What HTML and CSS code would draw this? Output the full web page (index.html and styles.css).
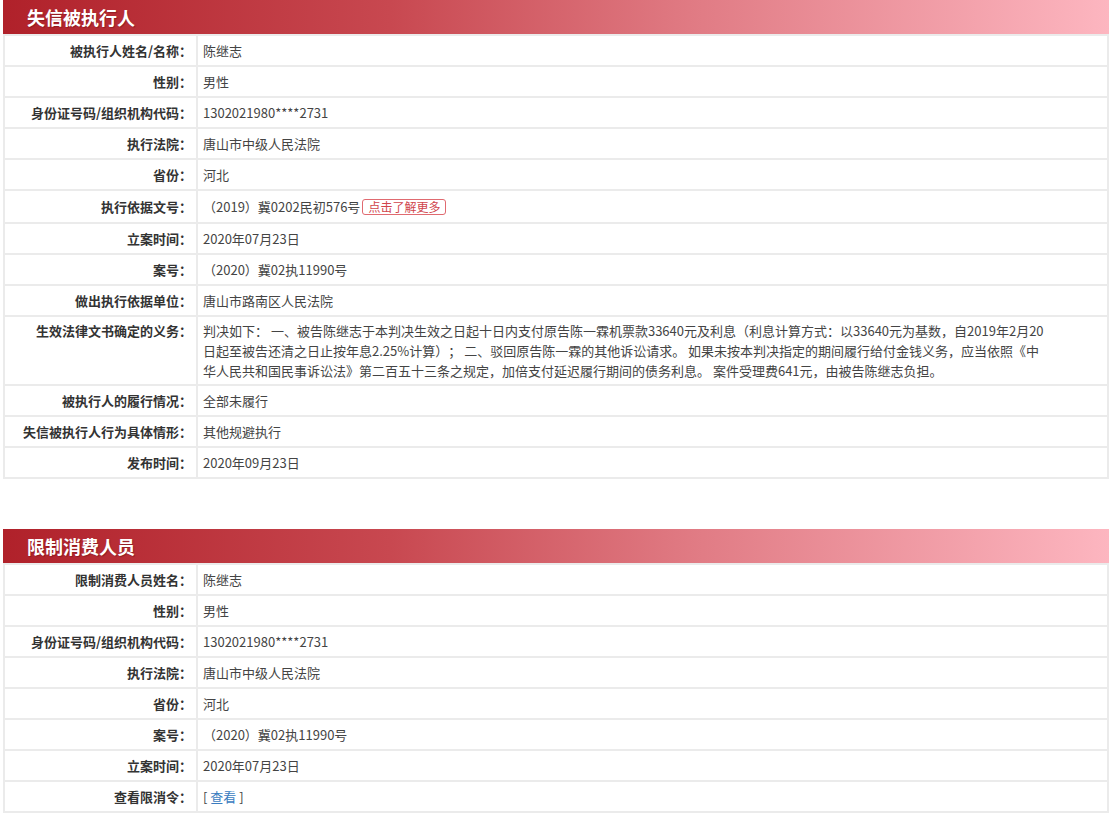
FILE: index.html
```html
<!DOCTYPE html>
<html lang="zh-CN">
<head>
<meta charset="utf-8">
<title>失信被执行人</title>
<link rel="stylesheet" href="styles.css">
</head>
<body>
<div class="page">
  <section class="block">
    <h2 class="block-title">失信被执行人</h2>
    <table class="info">
      <tr><th>被执行人姓名/名称：</th><td>陈继志</td></tr>
      <tr><th>性别：</th><td>男性</td></tr>
      <tr><th>身份证号码/组织机构代码：</th><td>1302021980****2731</td></tr>
      <tr><th>执行法院：</th><td>唐山市中级人民法院</td></tr>
      <tr><th>省份：</th><td>河北</td></tr>
      <tr class="tall"><th>执行依据文号：</th><td>（2019）冀0202民初576号<span class="more-btn">点击了解更多</span></td></tr>
      <tr><th>立案时间：</th><td>2020年07月23日</td></tr>
      <tr><th>案号：</th><td>（2020）冀02执11990号</td></tr>
      <tr><th>做出执行依据单位：</th><td>唐山市路南区人民法院</td></tr>
      <tr class="multi"><th>生效法律文书确定的义务：</th><td>判决如下： 一、被告陈继志于本判决生效之日起十日内支付原告陈一霖机票款33640元及利息（利息计算方式：以33640元为基数，自2019年2月20日起至被告还清之日止按年息2.25%计算）； 二、驳回原告陈一霖的其他诉讼请求。 如果未按本判决指定的期间履行给付金钱义务，应当依照《中华人民共和国民事诉讼法》第二百五十三条之规定，加倍支付延迟履行期间的债务利息。 案件受理费641元，由被告陈继志负担。</td></tr>
      <tr><th>被执行人的履行情况：</th><td>全部未履行</td></tr>
      <tr><th>失信被执行人行为具体情形：</th><td>其他规避执行</td></tr>
      <tr><th>发布时间：</th><td>2020年09月23日</td></tr>
    </table>
  </section>

  <section class="block">
    <h2 class="block-title">限制消费人员</h2>
    <table class="info">
      <tr><th>限制消费人员姓名：</th><td>陈继志</td></tr>
      <tr><th>性别：</th><td>男性</td></tr>
      <tr><th>身份证号码/组织机构代码：</th><td>1302021980****2731</td></tr>
      <tr><th>执行法院：</th><td>唐山市中级人民法院</td></tr>
      <tr><th>省份：</th><td>河北</td></tr>
      <tr><th>案号：</th><td>（2020）冀02执11990号</td></tr>
      <tr><th>立案时间：</th><td>2020年07月23日</td></tr>
      <tr><th>查看限消令：</th><td>[ <a class="link" href="#">查看</a> ]</td></tr>
    </table>
  </section>
</div>
</body>
</html>
```

FILE: styles.css
```css
html, body {
  margin: 0;
  padding: 0;
  background: #ffffff;
}

body {
  font-family: "Microsoft YaHei", "Noto Sans CJK SC", "Noto Sans", sans-serif;
  font-size: 13px;
  color: #444444;
  text-spacing-trim: space-all;
}

.page {
  margin: 0 3px;
  width: 1106px;
}

.block {
  margin-bottom: 50px;
}

.block-title {
  margin: 0;
  height: 34px;
  line-height: 34px;
  padding-left: 24px;
  font-size: 18px;
  font-weight: bold;
  color: #ffffff;
  text-shadow: 1px 1px 1px rgba(80, 0, 0, 0.35);
  background: linear-gradient(to right, #b0212a 0%, #c84850 35%, #e07a83 62%, #fdb6c0 100%);
}

.info {
  width: 100%;
  border-collapse: separate;
  border-spacing: 2px;
  background: #ebebeb;
}

.info th,
.info td {
  background: #ffffff;
  height: 23px;
  padding: 3px 4px;
  line-height: 20px;
  vertical-align: middle;
}

.info th {
  width: 183px;
  text-align: right;
  font-weight: bold;
  color: #333333;
  white-space: nowrap;
}

.info td {
  text-align: left;
  padding-left: 5px;
  padding-right: 56px;
  color: #444444;
}

.info .tall th,
.info .tall td {
  height: 25px;
}

.info .multi th {
  vertical-align: top;
  padding-top: 4px;
}

.info .multi td {
  padding-top: 4px;
  padding-bottom: 3px;
}

.more-btn {
  display: inline-block;
  margin-left: 2px;
  padding: 0 5px;
  height: 14px;
  line-height: 14px;
  font-size: 12px;
  color: #d0454c;
  border: 1px solid #e06a70;
  border-radius: 3px;
  vertical-align: middle;
  position: relative;
  top: -1px;
}

.link {
  color: #3a7cc0;
  text-decoration: none;
}
```
